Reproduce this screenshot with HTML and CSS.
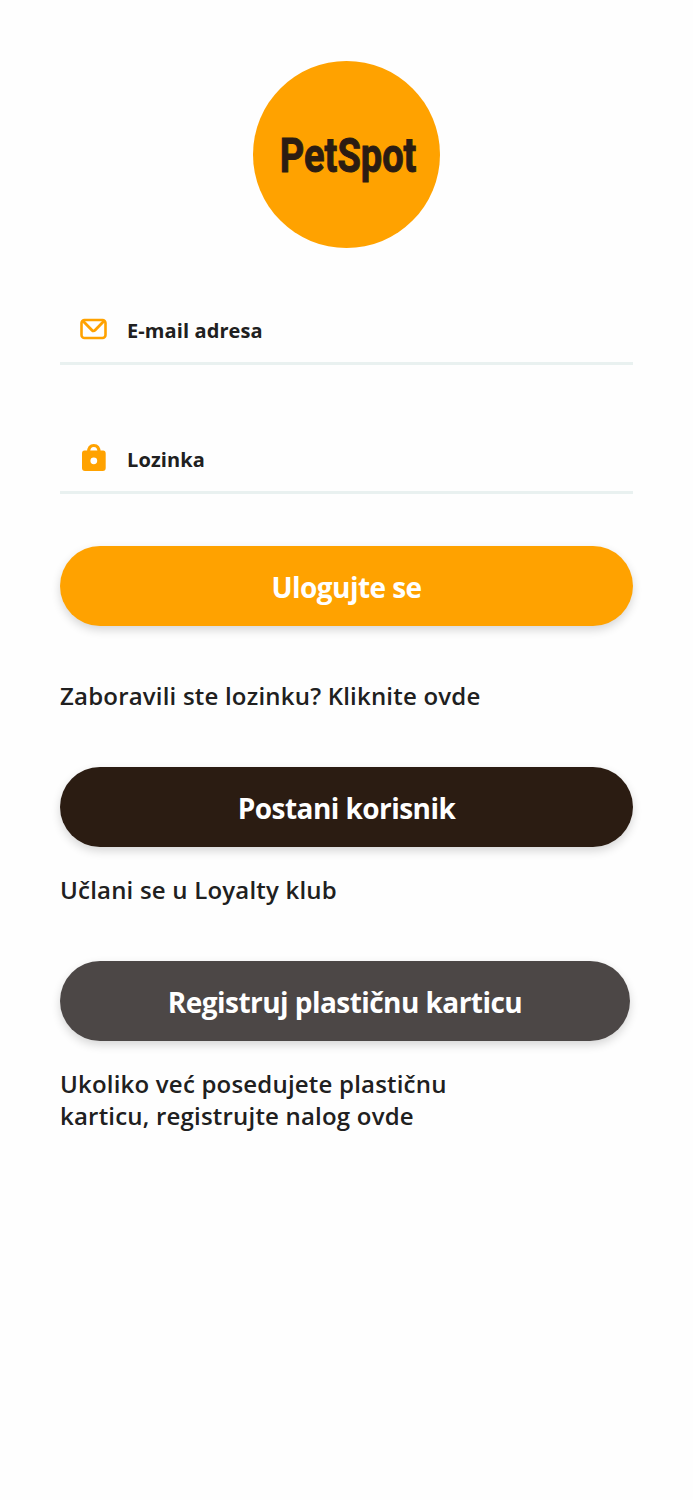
FILE: index.html
```html
<!DOCTYPE html>
<html lang="sr">
<head>
    <meta charset="UTF-8">
    <meta name="viewport" content="width=device-width, initial-scale=1.0">
    <title>PetSpot</title>
    <link rel="stylesheet" href="styles.css">
</head>
<body>
    <main class="login">
        <div class="logo">
            <span class="logo-text">PetSpot</span>
        </div>

        <form class="login-form">
            <div class="field">
                <svg class="field-icon" width="28" height="28" viewBox="0 0 28 28">
                    <rect x="1.5" y="5" width="24" height="18" rx="3" fill="none" stroke="#ffa200" stroke-width="2.6"/>
                    <path d="M3 6L12 15.200Q13.500 16.700 15 15.200L24 6" fill="none" stroke="#ffa200" stroke-width="2.8"/>
                </svg>
                <span class="field-label">E-mail adresa</span>
            </div>
            <div class="field">
                <svg class="field-icon" width="28" height="28" viewBox="0 0 28 28">
                    <path d="M8.500 8.500C8.500 4 10.500 1.500 13.800 1.500S19.100 4 19.100 8.500" fill="none" stroke="#ffa200" stroke-width="3.2"/>
                    <path fill="#ffa200" fill-rule="evenodd" d="M4.500 6.500H23Q25.700 6.500 25.700 9.500V24Q25.700 27 22.700 27H5Q2 27 2 24V9.500Q2 6.500 4.500 6.500ZM13.800 13.400A3.400 3.400 0 1 0 13.800 20.200A3.400 3.400 0 1 0 13.800 13.400Z"/>
                </svg>
                <span class="field-label">Lozinka</span>
            </div>
            <button type="button" class="btn btn-login">Ulogujte se</button>
        </form>

        <p class="note note-forgot">Zaboravili ste lozinku? Kliknite ovde</p>

        <button type="button" class="btn btn-join">Postani korisnik</button>
        <p class="note note-join">Učlani se u Loyalty klub</p>

        <button type="button" class="btn btn-card">Registruj plastičnu karticu</button>
        <p class="note note-card">Ukoliko već posedujete plastičnu karticu, registrujte nalog ovde</p>
    </main>
</body>
</html>
```
FILE: styles.css
```css
* {
    box-sizing: border-box;
}
body {
    margin: 0;
    background: #fefefe;
    color: #202020;
    font-family: "Open Sans", sans-serif;
}
.login {
    display: flex;
    flex-direction: column;
    min-height: 1500px;
    padding: 61px 60px 0;
}
.logo {
    display: flex;
    align-items: center;
    justify-content: center;
    width: 187px;
    height: 187px;
    margin: 0 auto 46px;
    border-radius: 50%;
    background: #ffa200;
}
.logo-text {
    color: #2b1c12;
    font-family: Roboto, sans-serif;
    font-size: 49px;
    font-weight: 700;
    line-height: 60px;
    transform: translate(2px, 1px) scaleX(0.775);
    -webkit-text-stroke: 1px #2b1c12;
}
.login-form {
    display: flex;
    flex-direction: column;
}
.field {
    display: flex;
    align-items: center;
    height: 71px;
    margin-bottom: 58px;
    padding: 2px 0 0 20px;
    border-bottom: 3px solid #e9f1f0;
}
.field + .field {
    margin-bottom: 52px;
}
.field-icon {
    margin-right: 19px;
    overflow: visible;
}
.field-label {
    padding-top: 4px;
    font-size: 20px;
    font-weight: 700;
    letter-spacing: 0.1px;
    line-height: 28px;
}
.btn {
    width: 573px;
    height: 80px;
    padding: 2px 0 0;
    border: none;
    border-radius: 40px;
    box-shadow: 0 4px 10px rgba(0,0,0,0.16);
    color: #fff;
    font-family: inherit;
    font-size: 28px;
    font-weight: 700;
    letter-spacing: -0.55px;
    cursor: pointer;
}
.btn-login { background: #ffa200; }
.btn-join { background: #2b1c12; }
.btn-card { width: 570px; background: #4c4746; }
.note {
    margin: 0;
    font-size: 24px;
    font-weight: 600;
    letter-spacing: 0.2px;
    line-height: 32px;
}
.note-forgot { margin: 54px 0 55px; }
.note-join { margin: 27px 0 55px; }
.note-card { width: 420px; margin-top: 27px; }
```
